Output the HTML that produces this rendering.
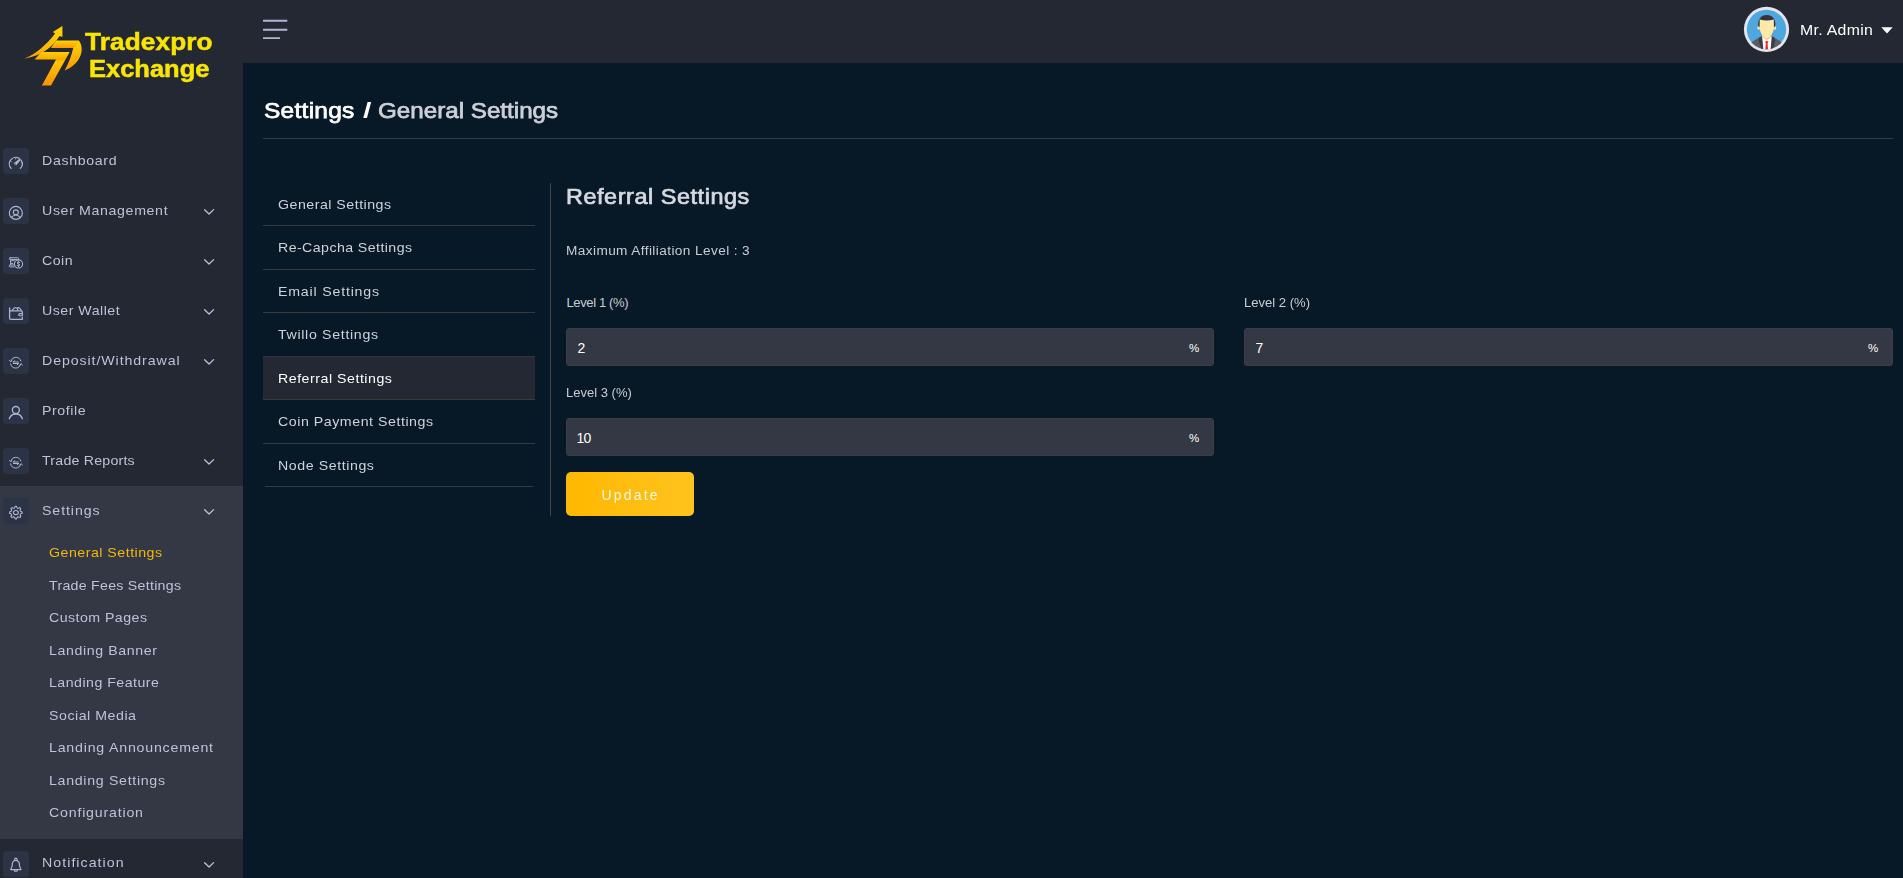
<!DOCTYPE html>
<html><head><meta charset="utf-8"><title>Tradexpro Exchange</title>
<style>
*{box-sizing:border-box;margin:0;padding:0}
html,body{width:1903px;height:878px;overflow:hidden;background:#071926;font-family:"Liberation Sans",sans-serif;}
.abs{position:absolute}
.t{position:absolute;white-space:nowrap;line-height:1;}
#sidebar{position:absolute;left:0;top:0;width:243px;height:878px;background:#242832}
#topbar{position:absolute;left:243px;top:0;width:1660px;height:63px;background:#242832}
.ib{position:absolute;left:3px;width:26px;height:26px;border-radius:4px;background:#2b3345}
.ib svg{position:absolute;left:0;top:0;width:26px;height:26px}
.mi{color:#bfc1d9;font-size:13px}
.si{color:#bfc1d9;font-size:13px}
.chev{position:absolute;left:204px;width:11px;height:7px}
.in{position:absolute;height:38px;background:#343844;border:1px solid #3c3d45;border-radius:3px}
.li{color:#cfd2dc;font-size:13px}
.hr{position:absolute;height:1px;background:#3a3a3a}
</style></head>
<body>
<div id="sidebar"></div><div id="topbar"></div>
<div class="abs" style="left:0;top:486px;width:243px;height:353px;background:#343844"></div>
<svg class="abs" style="left:0;top:0;width:243px;height:110px;filter:blur(0.35px)" viewBox="0 0 243 110">
<defs>
<linearGradient id="lgA" x1="0" y1="0" x2="0" y2="1"><stop offset="0" stop-color="#ffd400"/><stop offset="1" stop-color="#ff9600"/></linearGradient>
<linearGradient id="lgB" x1="0" y1="0" x2="0" y2="1"><stop offset="0" stop-color="#ffd000"/><stop offset="0.22" stop-color="#ffa800"/><stop offset="0.3" stop-color="#ffc400"/><stop offset="1" stop-color="#ff9000"/></linearGradient>
<linearGradient id="lgC" x1="1" y1="0" x2="0" y2="1"><stop offset="0" stop-color="#ffd800"/><stop offset="1" stop-color="#ff9a00"/></linearGradient>
</defs>
<path d="M24.1 58.7 C36 54 46 45 55.1 33.4 L52.8 31.9 L62.4 25.9 L62.4 36.9 L59.6 36.1 C52 47.5 42 56 24.1 58.7 Z" fill="url(#lgC)"/>
<path d="M56.3 40.5 L79 40.5 L73.6 48 L50.8 48 Z" fill="url(#lgA)"/>
<path d="M73.3 47.8 L78.8 40.5 C83.8 46 84.2 62 64.6 70.6 Q70.8 59.3 73.3 47.8 Z" fill="url(#lgA)"/>
<path d="M41.4 51.9 L69.7 51.9 L51 85.6 L41.9 85.6 L56 59.6 L34.6 59.6 Z" fill="url(#lgB)"/>
</svg>

<svg class="abs" style="left:260px;top:15px;width:32px;height:28px" viewBox="0 0 32 28"><path d="M3 5.8 L27.3 5.8 M3 14.75 L27.3 14.75 M3 23.1 L20 23.1" fill="none" stroke="#b2b4d6" stroke-width="1.9"/></svg>
<svg class="abs" style="left:1736px;top:0;width:60px;height:60px" viewBox="0 0 60 60">
<defs><clipPath id="avc"><circle cx="30.5" cy="29.4" r="19.9"/></clipPath></defs>
<circle cx="30.5" cy="29.4" r="22.6" fill="#e4e4ec"/>
<circle cx="30.5" cy="29.4" r="19.7" fill="#4fa7e0"/>
<g clip-path="url(#avc)">
<path d="M14 43 L23.9 36.9 L37.4 36.9 L47 43 L47 52 L14 52 Z" fill="#5b5c65"/>
<path d="M26 36.9 L35.9 36.9 L35.2 51 L26.7 51 Z" fill="#fafafa"/>
<path d="M23.6 37.1 L26 36.6 L27.4 50 L25.6 50 L22.6 40.5 Z" fill="#3b3c45"/>
<path d="M37.8 37.1 L35.9 36.6 L34.5 50 L36.3 50 L39.3 40.5 Z" fill="#3b3c45"/>
<path d="M29 41.7 L30.75 40.8 L32.5 41.7 L31.6 43.3 L32.1 50 L29.2 50 L29.9 43.3 Z" fill="#ee2b24"/>
<path d="M26.3 33 L35.2 33 L35.4 37 L30.75 40.2 L26.1 37 Z" fill="#eccd8c"/>
<ellipse cx="22.6" cy="27.8" rx="1.3" ry="2.1" fill="#fbe29c"/>
<ellipse cx="38.9" cy="27.8" rx="1.3" ry="2.1" fill="#fbe29c"/>
<path d="M22.3 26.8 C21.2 19.5 25 15 30.75 15 C36.5 15 40.3 19.5 39.2 26.8 L37 27 L24.5 27 Z" fill="#34343c"/>
<path d="M23.7 19.6 Q30.75 21.4 37.8 19.6 L37.9 28 C37.4 33.2 33.8 38.2 30.75 38.4 C27.7 38.2 24.1 33.2 23.6 28 Z" fill="#fdeaa8"/>
</g>
</svg>

<div class="ib" style="top:148px"><svg viewBox="0 0 26 26" fill="none" stroke="#afb3d2" stroke-width="1.15" stroke-linecap="round" stroke-linejoin="round"><path d="M8.19 20.41 A6.45 6.45 0 0 1 16.1 10.35" stroke-width="1.25"/><path d="M18.35 12.65 A6.45 6.45 0 0 1 17.31 20.41" stroke-width="1.25"/><path d="M11.4 15.15 L17.1 10.85 L17.75 11.55 L13.05 16.9 Z" fill="#afb3d2" stroke-width="0.9"/><circle cx="12.3" cy="15.95" r="0.55" fill="#2a3344" stroke="none"/><path d="M12.75 10.2 L12.75 11.1 M7.7 13.3 L8.5 13.7" stroke-width="0.9"/></svg></div>
<div class="ib" style="top:198px"><svg viewBox="0 0 26 26" fill="none" stroke="#afb3d2" stroke-width="1.15" stroke-linecap="round" stroke-linejoin="round"><circle cx="12.85" cy="14.9" r="6.5"/><circle cx="12.85" cy="14.3" r="2.5"/><path d="M8.4 19.5 Q12.85 14.4 17.3 19.5"/></svg></div>
<svg class="chev" style="top:208px" viewBox="0 0 11 7"><path d="M0.6 1.7 L5.05 6.05 L9.6 1.6" fill="none" stroke="#bdbfe2" stroke-width="1.3" stroke-linecap="round" stroke-linejoin="round"/></svg>
<div class="ib" style="top:248px"><svg viewBox="0 0 26 26" fill="none" stroke="#afb3d2" stroke-width="1.15" stroke-linecap="round" stroke-linejoin="round"><rect x="6.3" y="9.75" width="9.3" height="1.8" rx="0.9" stroke-width="1"/><path d="M7.6 11.7 L7.6 16.8 M8.6 12.7 L11.2 12.7 M8.4 15.4 L9.8 15.4" stroke-width="1"/><path d="M11.2 18.9 L7.1 18.9 Q6.2 18.9 6.2 17.9 Q6.2 17 7.1 17 L10.6 17" stroke-width="1"/><circle cx="15.5" cy="15.95" r="4.05" fill="#222938" stroke-width="1.15"/><path d="M16.55 14.5 Q15.6 13.6 14.75 14.3 Q14.2 15.3 15.5 15.9 Q16.8 16.5 16.2 17.5 Q15.3 18.3 14.3 17.4 M15.5 13.2 L15.5 13.7 M15.5 18.1 L15.5 18.7" stroke-width="1.15"/></svg></div>
<svg class="chev" style="top:258px" viewBox="0 0 11 7"><path d="M0.6 1.7 L5.05 6.05 L9.6 1.6" fill="none" stroke="#bdbfe2" stroke-width="1.3" stroke-linecap="round" stroke-linejoin="round"/></svg>
<div class="ib" style="top:298px"><svg viewBox="0 0 26 26" fill="none" stroke="#afb3d2" stroke-width="1.15" stroke-linecap="round" stroke-linejoin="round"><path d="M6.6 9.9 L6.6 20 Q6.6 21.3 7.9 21.3 L19.3 21.3 L19.3 19.2" stroke-width="1.3"/><path d="M6.8 12.9 L18.3 12.9 Q19.3 12.9 19.3 13.9 L19.3 15.3" stroke-width="1.3"/><rect x="15.7" y="15.6" width="3.9" height="2.1" rx="1.05" stroke-width="1.1"/><path d="M9.3 12.1 Q11 9.6 12.6 9.7 Q14.3 9.8 14.8 12 M13.6 10.2 Q15.2 9 16.6 10.2 Q17.6 11.2 18.4 12.6" stroke-width="1.15"/></svg></div>
<svg class="chev" style="top:308px" viewBox="0 0 11 7"><path d="M0.6 1.7 L5.05 6.05 L9.6 1.6" fill="none" stroke="#bdbfe2" stroke-width="1.3" stroke-linecap="round" stroke-linejoin="round"/></svg>
<div class="ib" style="top:348px"><svg viewBox="0 0 26 26" fill="none" stroke="#afb3d2" stroke-width="1.15" stroke-linecap="round" stroke-linejoin="round"><path d="M7.9 13.3 A5.2 5.2 0 0 1 17.9 13.0" stroke-width="1"/><path d="M6.3 12.4 L7.8 13.8 L8.9 12.1" stroke-width="0.9"/><path d="M7.6 15.9 A5.2 5.2 0 0 0 17.7 16.2" stroke-width="1"/><path d="M16.7 17.2 L17.9 15.7 L19.4 16.9" stroke-width="0.9"/><path d="M10.3 14 L15.4 14 M10.3 14 L11.5 12.7 M10.4 15.5 L15.5 15.5 M15.5 15.5 L14.3 16.8" stroke-width="1"/></svg></div>
<svg class="chev" style="top:358px" viewBox="0 0 11 7"><path d="M0.6 1.7 L5.05 6.05 L9.6 1.6" fill="none" stroke="#bdbfe2" stroke-width="1.3" stroke-linecap="round" stroke-linejoin="round"/></svg>
<div class="ib" style="top:398px"><svg viewBox="0 0 26 26" fill="none" stroke="#afb3d2" stroke-width="1.15" stroke-linecap="round" stroke-linejoin="round"><circle cx="12.85" cy="12" r="3.5" stroke-width="1.35"/><path d="M6.3 20.7 A6.9 6.9 0 0 1 19.4 20.7" stroke-width="1.35"/></svg></div>
<div class="ib" style="top:448px"><svg viewBox="0 0 26 26" fill="none" stroke="#afb3d2" stroke-width="1.15" stroke-linecap="round" stroke-linejoin="round"><path d="M7.9 13.3 A5.2 5.2 0 0 1 17.9 13.0" stroke-width="1"/><path d="M6.3 12.4 L7.8 13.8 L8.9 12.1" stroke-width="0.9"/><path d="M7.6 15.9 A5.2 5.2 0 0 0 17.7 16.2" stroke-width="1"/><path d="M16.7 17.2 L17.9 15.7 L19.4 16.9" stroke-width="0.9"/><path d="M10.3 14 L15.4 14 M10.3 14 L11.5 12.7 M10.4 15.5 L15.5 15.5 M15.5 15.5 L14.3 16.8" stroke-width="1"/></svg></div>
<svg class="chev" style="top:458px" viewBox="0 0 11 7"><path d="M0.6 1.7 L5.05 6.05 L9.6 1.6" fill="none" stroke="#bdbfe2" stroke-width="1.3" stroke-linecap="round" stroke-linejoin="round"/></svg>
<div class="ib" style="top:498px"><svg viewBox="0 0 26 26" fill="none" stroke="#afb3d2" stroke-width="1.15" stroke-linecap="round" stroke-linejoin="round"><path d="M12.16 8.34 L13.54 8.34 L14.20 9.94 L15.19 10.35 L16.79 9.68 L17.77 10.66 L17.10 12.26 L17.51 13.25 L19.11 13.91 L19.11 15.29 L17.51 15.95 L17.10 16.94 L17.77 18.54 L16.79 19.52 L15.19 18.85 L14.20 19.26 L13.54 20.86 L12.16 20.86 L11.50 19.26 L10.51 18.85 L8.91 19.52 L7.93 18.54 L8.60 16.94 L8.19 15.95 L6.59 15.29 L6.59 13.91 L8.19 13.25 L8.60 12.26 L7.93 10.66 L8.91 9.68 L10.51 10.35 L11.50 9.94 Z" stroke-width="1.1"/><ellipse cx="12.85" cy="14.6" rx="2.5" ry="2.05" stroke-width="1.1"/></svg></div>
<svg class="chev" style="top:508px" viewBox="0 0 11 7"><path d="M0.6 1.7 L5.05 6.05 L9.6 1.6" fill="none" stroke="#bdbfe2" stroke-width="1.3" stroke-linecap="round" stroke-linejoin="round"/></svg>
<div class="ib" style="top:851px"><svg viewBox="0 0 26 26" fill="none" stroke="#afb3d2" stroke-width="1.15" stroke-linecap="round" stroke-linejoin="round"><path d="M7.7 18.6 L18 18.6 L16.4 14.6 L16.4 13 A3.55 3.55 0 0 0 9.3 13 L9.3 14.6 Z" stroke-width="1.2"/><circle cx="12.85" cy="8.4" r="1.25" stroke-width="1.1"/><path d="M11.1 19 A1.8 1.8 0 0 0 14.6 19" stroke-width="1.1"/></svg></div>
<svg class="chev" style="top:861px" viewBox="0 0 11 7"><path d="M0.6 1.7 L5.05 6.05 L9.6 1.6" fill="none" stroke="#bdbfe2" stroke-width="1.3" stroke-linecap="round" stroke-linejoin="round"/></svg>
<div class="hr" style="left:263px;top:138px;width:1630px"></div>
<div class="abs" style="left:263px;top:356px;width:272px;height:44px;background:#242832"></div>
<div class="hr" style="left:263px;top:225px;width:272px"></div>
<div class="hr" style="left:263px;top:269px;width:272px"></div>
<div class="hr" style="left:263px;top:312px;width:272px"></div>
<div class="abs" style="left:263px;top:356px;width:272px;height:1px;background:#33343a"></div>
<div class="hr" style="left:263px;top:399px;width:272px"></div>
<div class="hr" style="left:263px;top:443px;width:272px"></div>
<div class="hr" style="left:265px;top:486px;width:268px"></div>
<div class="abs" style="left:550px;top:183px;width:1px;height:333px;background:#45423f"></div>
<div class="in" style="left:566px;top:328px;width:648px"></div>
<div class="in" style="left:1244px;top:328px;width:649px"></div>
<div class="in" style="left:566px;top:418px;width:648px"></div>
<div class="abs" style="left:566px;top:472px;width:128px;height:44px;border-radius:5px;background:linear-gradient(90deg,#ffb800,#ffc31f)"></div>
<svg class="abs" style="left:1881px;top:27px;width:12px;height:7px" viewBox="0 0 12 7"><path d="M0.3 0.3 L11.7 0.3 L6 6.6 Z" fill="#fff"/></svg>
<div class="t h1a" style="left:264.0px;top:100.0px;letter-spacing:0.23px;transform:scaleX(1.090);transform-origin:0 0;color:#fff;font-size:22.5px;-webkit-text-stroke:0.75px #fff">Settings</div>
<div class="t h1a" style="left:362.6px;top:100.0px;letter-spacing:1.07px;transform:scaleX(1.350);transform-origin:0 0;color:#fff;font-size:22.5px;font-weight:bold">/</div>
<div class="t h1b" style="left:377.5px;top:100.0px;letter-spacing:0.00px;transform:scaleX(1.075);transform-origin:0 0;color:#cdd0d8;font-size:22.5px;-webkit-text-stroke:0.75px #cdd0d8">General Settings</div>
<div class="t li" style="left:278.0px;top:197.8px;letter-spacing:0.46px;transform:scaleX(1.090);transform-origin:0 0;">General Settings</div>
<div class="t li" style="left:278.0px;top:241.3px;letter-spacing:0.39px;transform:scaleX(1.090);transform-origin:0 0;">Re-Capcha Settings</div>
<div class="t li" style="left:278.0px;top:284.8px;letter-spacing:0.74px;transform:scaleX(1.090);transform-origin:0 0;">Email Settings</div>
<div class="t li" style="left:278.0px;top:328.3px;letter-spacing:0.62px;transform:scaleX(1.090);transform-origin:0 0;">Twillo Settings</div>
<div class="t li" style="left:278.0px;top:371.8px;letter-spacing:0.48px;transform:scaleX(1.090);transform-origin:0 0;color:#fff">Referral Settings</div>
<div class="t li" style="left:278.0px;top:415.3px;letter-spacing:0.50px;transform:scaleX(1.090);transform-origin:0 0;">Coin Payment Settings</div>
<div class="t li" style="left:278.0px;top:458.8px;letter-spacing:0.53px;transform:scaleX(1.090);transform-origin:0 0;">Node Settings</div>
<div class="t h2" style="left:565.9px;top:187.0px;letter-spacing:0.50px;transform:scaleX(1.090);transform-origin:0 0;color:#d6d9e1;font-size:21.5px;-webkit-text-stroke:0.7px #d6d9e1">Referral Settings</div>
<div class="t p" style="left:566.4px;top:245.0px;letter-spacing:0.37px;transform:scaleX(1.090);transform-origin:0 0;color:#c9ccd6;font-size:12.5px">Maximum Affiliation Level : 3</div>
<div class="t lb" style="left:566.4px;top:296.0px;letter-spacing:-0.35px;color:#c9ccd6;font-size:13px">Level 1 (%)</div>
<div class="t lb" style="left:1244.4px;top:296.0px;letter-spacing:0.00px;transform:scaleX(1.005);transform-origin:0 0;color:#c9ccd6;font-size:13px">Level 2 (%)</div>
<div class="t lb" style="left:566.4px;top:386.0px;letter-spacing:0.00px;transform:scaleX(1.001);transform-origin:0 0;color:#c9ccd6;font-size:13px">Level 3 (%)</div>
<div class="t v" style="left:577.6px;top:341.3px;letter-spacing:1.10px;color:#fff;font-size:14px">2</div>
<div class="t v" style="left:1255.6px;top:341.3px;letter-spacing:0.80px;color:#fff;font-size:14px">7</div>
<div class="t v" style="left:576.4px;top:431.3px;letter-spacing:-0.68px;color:#fff;font-size:14px">10</div>
<div class="t pc" style="left:1189.0px;top:343.3px;letter-spacing:-0.03px;color:#fff;font-size:11.5px">%</div>
<div class="t pc" style="left:1868.0px;top:343.3px;letter-spacing:-0.03px;color:#fff;font-size:11.5px">%</div>
<div class="t pc" style="left:1189.0px;top:433.3px;letter-spacing:-0.03px;color:#fff;font-size:11.5px">%</div>
<div class="t adm" style="left:1799.8px;top:23.0px;letter-spacing:0.29px;transform:scaleX(1.090);transform-origin:0 0;color:#fff;font-size:14.5px">Mr. Admin</div>
<div style="position:absolute;left:0;top:0;width:1903px;height:878px;will-change:transform">
<div class="t mi" style="left:42.4px;top:154.0px;letter-spacing:0.60px;transform:scaleX(1.090);transform-origin:0 0;">Dashboard</div>
<div class="t mi" style="left:42.4px;top:204.0px;letter-spacing:0.59px;transform:scaleX(1.090);transform-origin:0 0;">User Management</div>
<div class="t mi" style="left:42.4px;top:254.0px;letter-spacing:0.44px;transform:scaleX(1.090);transform-origin:0 0;">Coin</div>
<div class="t mi" style="left:42.4px;top:304.0px;letter-spacing:0.45px;transform:scaleX(1.090);transform-origin:0 0;">User Wallet</div>
<div class="t mi" style="left:42.4px;top:354.0px;letter-spacing:0.84px;transform:scaleX(1.090);transform-origin:0 0;">Deposit/Withdrawal</div>
<div class="t mi" style="left:42.4px;top:404.0px;letter-spacing:0.52px;transform:scaleX(1.090);transform-origin:0 0;">Profile</div>
<div class="t mi" style="left:42.4px;top:454.0px;letter-spacing:0.20px;transform:scaleX(1.090);transform-origin:0 0;">Trade Reports</div>
<div class="t mi" style="left:42.4px;top:504.0px;letter-spacing:0.84px;transform:scaleX(1.090);transform-origin:0 0;">Settings</div>
<div class="t mi" style="left:42.4px;top:856.0px;letter-spacing:0.96px;transform:scaleX(1.090);transform-origin:0 0;">Notification</div>
<div class="t si" style="left:49.0px;top:546.0px;letter-spacing:0.46px;transform:scaleX(1.090);transform-origin:0 0;color:#f0b90b">General Settings</div>
<div class="t si" style="left:49.0px;top:578.5px;letter-spacing:0.25px;transform:scaleX(1.090);transform-origin:0 0;">Trade Fees Settings</div>
<div class="t si" style="left:49.0px;top:611.1px;letter-spacing:0.42px;transform:scaleX(1.090);transform-origin:0 0;">Custom Pages</div>
<div class="t si" style="left:49.0px;top:643.6px;letter-spacing:0.56px;transform:scaleX(1.090);transform-origin:0 0;">Landing Banner</div>
<div class="t si" style="left:49.0px;top:676.2px;letter-spacing:0.44px;transform:scaleX(1.090);transform-origin:0 0;">Landing Feature</div>
<div class="t si" style="left:49.0px;top:708.8px;letter-spacing:0.49px;transform:scaleX(1.090);transform-origin:0 0;">Social Media</div>
<div class="t si" style="left:49.0px;top:741.3px;letter-spacing:0.73px;transform:scaleX(1.090);transform-origin:0 0;">Landing Announcement</div>
<div class="t si" style="left:49.0px;top:773.8px;letter-spacing:0.64px;transform:scaleX(1.090);transform-origin:0 0;">Landing Settings</div>
<div class="t si" style="left:49.0px;top:806.4px;letter-spacing:0.74px;transform:scaleX(1.090);transform-origin:0 0;">Configuration</div>
<div class="t btn" style="left:601.5px;top:488.0px;letter-spacing:2.19px;color:#fff5de;font-size:14px">Update</div>
<div class="t lg" style="left:85.3px;top:30.0px;letter-spacing:0.12px;transform:scaleX(1.090);transform-origin:0 0;color:#fae500;font-size:24px;font-weight:bold;-webkit-text-stroke:0.5px #fae500;filter:blur(0.3px)">Tradexpro</div>
<div class="t lg" style="left:89.0px;top:57.2px;letter-spacing:-0.00px;transform:scaleX(1.062);transform-origin:0 0;color:#fae500;font-size:24px;font-weight:bold;-webkit-text-stroke:0.5px #fae500;filter:blur(0.3px)">Exchange</div>
</div>
</body></html>
